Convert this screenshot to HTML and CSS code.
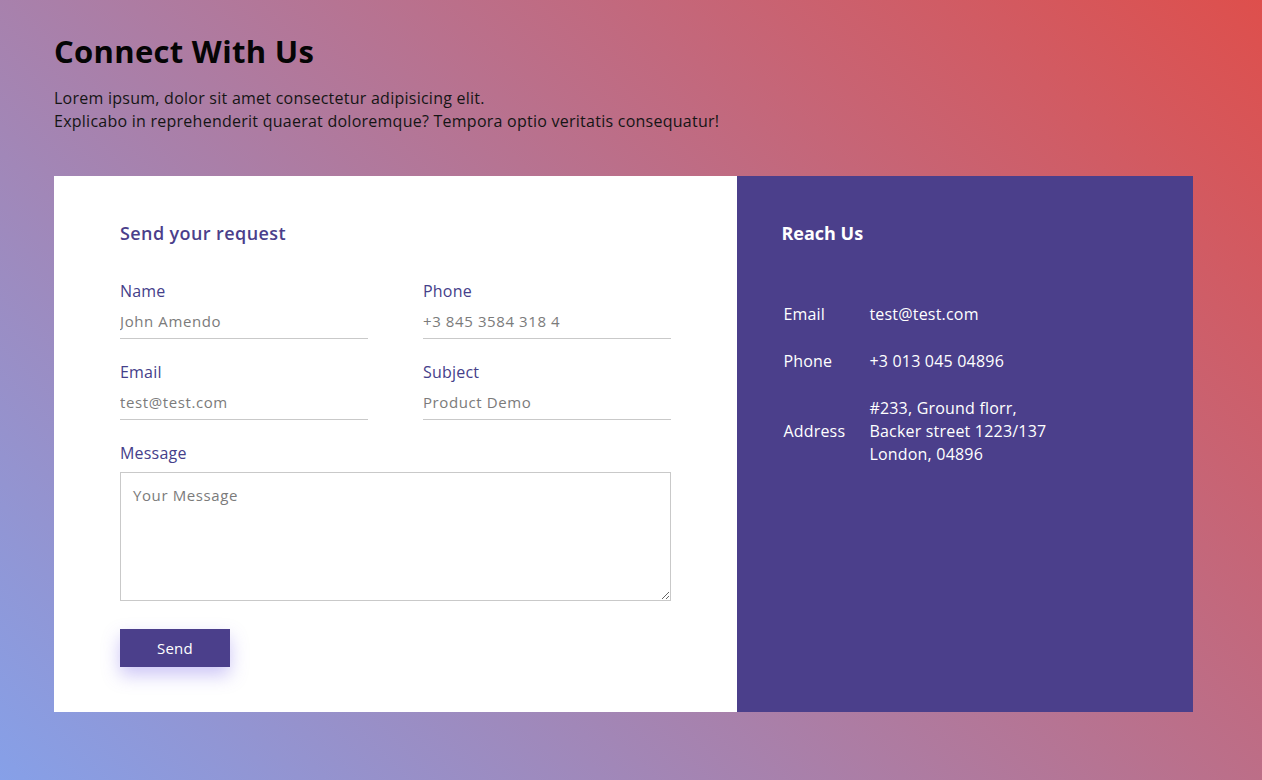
FILE: index.html
```html
<!DOCTYPE html>
<html lang="en">
<head>
<meta charset="utf-8">
<title>Connect With Us</title>
<link rel="stylesheet" href="styles.css">
</head>
<body>
<main class="page">
  <header class="intro">
    <h1 class="title">Connect With Us</h1>
    <p class="lead">Lorem ipsum, dolor sit amet consectetur adipisicing elit.<br>Explicabo in reprehenderit quaerat doloremque? Tempora optio veritatis consequatur!</p>
  </header>
  <section class="card">
    <form class="form-panel">
      <h2 class="form-title">Send your request</h2>
      <div class="grid">
        <label class="field">
          <span class="label">Name</span>
          <input class="input" type="text" placeholder="John Amendo">
        </label>
        <label class="field">
          <span class="label">Phone</span>
          <input class="input" type="text" placeholder="+3 845 3584 318 4">
        </label>
        <label class="field">
          <span class="label">Email</span>
          <input class="input" type="text" placeholder="test@test.com">
        </label>
        <label class="field">
          <span class="label">Subject</span>
          <input class="input" type="text" placeholder="Product Demo">
        </label>
      </div>
      <label class="field message">
        <span class="label">Message</span>
        <textarea class="textarea" placeholder="Your Message"></textarea>
      </label>
      <button class="send" type="button">Send</button>
    </form>
    <aside class="info-panel">
      <h2 class="info-title">Reach Us</h2>
      <table class="info">
        <tr><td class="k">Email</td><td class="v">test@test.com</td></tr>
        <tr><td class="k">Phone</td><td class="v">+3 013 045 04896</td></tr>
        <tr><td class="k">Address</td><td class="v">#233, Ground florr,<br>Backer street 1223/137<br>London, 04896</td></tr>
      </table>
    </aside>
  </section>
</main>
</body>
</html>
```
FILE: styles.css
```css
* { box-sizing: border-box; }
html, body { margin: 0; height: 100%; }
body {
  font-family: "Open Sans", "Noto Sans", sans-serif;
  background: linear-gradient(45deg, #86a0e8 0%, #de4f4c 100%);
  color: #111;
  min-height: 780px;
}
.page {
  padding: 30px 69px 0 54px;
}
.intro { height: 146px; }
.title {
  margin: 0;
  font-size: 31px;
  font-weight: 700;
  line-height: 42px;
  letter-spacing: 0.3px;
  color: #050505;
}
.lead {
  margin: 15px 0 0;
  font-size: 16px;
  line-height: 23px;
  letter-spacing: 0.25px;
  color: #151515;
}
.card {
  display: flex;
  width: 1139px;
  height: 536px;
}
.form-panel {
  width: 60%;
  background: #fff;
  padding: 43px 66px 0;
}
.form-title {
  margin: 0 0 32px;
  font-size: 18px;
  font-weight: 600;
  letter-spacing: 0.4px;
  color: #4b3f8b;
  line-height: 28px;
}
.grid {
  display: grid;
  grid-template-columns: 248px 248px;
  column-gap: 55px;
  row-gap: 21px;
}
.field { display: flex; flex-direction: column; }
.label {
  font-size: 16px;
  line-height: 24px;
  letter-spacing: 0.2px;
  color: #45408a;
}
.input {
  border: 0;
  border-bottom: 1px solid #c9c9c9;
  padding: 8px 0 7px;
  font: inherit;
  font-size: 15px;
  letter-spacing: 0.6px;
  line-height: 20px;
  outline: none;
  background: transparent;
}
.input::placeholder, .textarea::placeholder { color: #7b7b7b; }
.message { margin-top: 21px; }
.textarea {
  margin-top: 7px;
  width: 551px;
  height: 129px;
  border: 1px solid #c9c9c9;
  padding: 12px 12px;
  font: inherit;
  font-size: 15px;
  letter-spacing: 0.6px;
  resize: vertical;
  outline: none;
}
.send {
  margin-top: 28px;
  width: 110px;
  height: 38px;
  border: 0;
  background: #4b3f8b;
  color: #fff;
  font: inherit;
  font-size: 15px;
  letter-spacing: 0.3px;
  box-shadow: 0 8px 18px rgba(110, 90, 230, 0.35);
  cursor: pointer;
}
.info-panel {
  width: 40%;
  background: #4b3f8b;
  color: #fff;
  padding: 43px 44px 0;
}
.info-title {
  margin: 0;
  font-size: 18px;
  font-weight: 700;
  line-height: 28px;
}
.info {
  margin-top: 44px;
  border-collapse: collapse;
  font-size: 16px;
  letter-spacing: 0.2px;
  line-height: 23px;
}
.info td { padding: 12px 0; vertical-align: middle; }
.info .k { padding-left: 2px; width: 88px; }
```
